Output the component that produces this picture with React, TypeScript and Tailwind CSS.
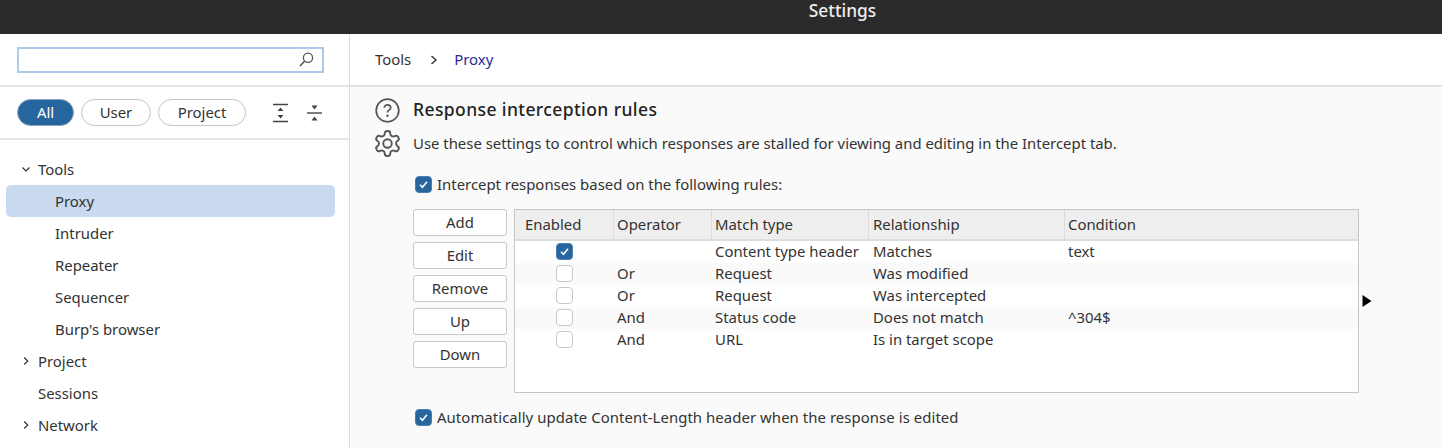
import React from "react";

const Check = ({ on }: { on: boolean }) =>
  on ? (
    <span className="flex h-[17px] w-[17px] shrink-0 items-center justify-center rounded-[4px] bg-[#27659f] border border-[#4a7fb0]">
      <svg width="11" height="11" viewBox="0 0 11 11" fill="none">
        <path d="M2 5.8 L4.4 8.2 L9 2.8" stroke="#fff" strokeWidth="1.6" />
      </svg>
    </span>
  ) : (
    <span className="block h-[17px] w-[17px] shrink-0 rounded-[4px] bg-white border border-[#c8c8c8]" />
  );

const Pill = ({ label, w, active }: { label: string; w: string; active?: boolean }) => (
  <div
    className={`flex h-[27px] items-center justify-center rounded-full border text-[14.9px] ${w} ${
      active ? "bg-[#27659f] border-[#8aa6c0] text-white" : "bg-white border-[#c4c4c4] text-[#333]"
    }`}
  >
    {label}
  </div>
);

const TreeRow = ({ label, depth, arrow, selected }: { label: string; depth: number; arrow?: "down" | "right"; selected?: boolean }) => (
  <div className={`flex h-8 items-center rounded-[5px] ${selected ? "bg-[#c9daf0]" : ""}`}>
    <div className={depth === 1 ? "w-[49px]" : "w-[32px] flex justify-center pl-[7px]"}>
      {arrow === "down" && (
        <svg width="10" height="10" viewBox="0 0 10 10" fill="none">
          <path d="M1.5 3.5 L5 7 L8.5 3.5" stroke="#333" strokeWidth="1.2" />
        </svg>
      )}
      {arrow === "right" && (
        <svg width="10" height="10" viewBox="0 0 10 10" fill="none">
          <path d="M3.2 1.5 L6.7 5 L3.2 8.5" stroke="#333" strokeWidth="1.2" />
        </svg>
      )}
    </div>
    <span className="text-[14.9px] text-[#333]">{label}</span>
  </div>
);

const cols = ["w-[99px]", "w-[98px]", "w-[157px]", "w-[196px]", "flex-1"];
const headers = ["Enabled", "Operator", "Match type", "Relationship", "Condition"];
const rows = [
  { on: true, op: "", match: "Content type header", rel: "Matches", cond: "text" },
  { on: false, op: "Or", match: "Request", rel: "Was modified", cond: "" },
  { on: false, op: "Or", match: "Request", rel: "Was intercepted", cond: "" },
  { on: false, op: "And", match: "Status code", rel: "Does not match", cond: "^304$" },
  { on: false, op: "And", match: "URL", rel: "Is in target scope", cond: "" },
];

export default function App() {
  return (
    <div className="flex h-[448px] w-[1442px] flex-col overflow-hidden bg-white text-[#333] font-['Noto_Sans',sans-serif]">
      <div className="flex h-[34px] shrink-0 items-start justify-center bg-[#2b2b2b] pl-[243px]">
        <span className="text-[17.3px] font-medium leading-[22px] text-[#eeeeee]">Settings</span>
      </div>
      <div className="flex min-h-0 flex-1">
        <aside className="flex w-[350px] shrink-0 flex-col border-r border-[#dcdcdc] bg-white">
          <div className="flex h-[53px] shrink-0 items-center border-b-2 border-[#e4e4e4] pl-[17px] pr-[25px]">
            <div className="flex h-[26px] flex-1 items-center justify-end border-2 border-[#a9cbed] bg-white pr-[7px]">
              <svg width="17" height="17" viewBox="0 0 17 17" fill="none">
                <circle cx="10" cy="6.8" r="4.6" stroke="#555" strokeWidth="1.3" />
                <path d="M6.6 10.2 L2 15" stroke="#555" strokeWidth="1.5" />
              </svg>
            </div>
          </div>
          <div className="flex h-[53px] shrink-0 items-center border-b-2 border-[#e4e4e4] pl-[17px]">
            <div className="flex gap-[7px]">
              <Pill label="All" w="w-[57px]" active />
              <Pill label="User" w="w-[70px]" />
              <Pill label="Project" w="w-[88px]" />
            </div>
            <div className="ml-[26px] flex items-center gap-[17px]">
              <svg width="17" height="20" viewBox="0 0 17 20" fill="none">
                <path d="M1 1.5 H16 M1 18.5 H16" stroke="#444" strokeWidth="1.4" />
                <path d="M8.5 4.5 L11.5 8 H5.5 Z M8.5 15.5 L11.5 12 H5.5 Z" fill="#444" />
              </svg>
              <svg width="17" height="20" viewBox="0 0 17 20" fill="none">
                <path d="M1 10 H16" stroke="#444" strokeWidth="1.4" />
                <path d="M8.5 6.5 L5.5 2.5 H11.5 Z M8.5 13.5 L5.5 17.5 H11.5 Z" fill="#444" />
              </svg>
            </div>
          </div>
          <div className="flex flex-col pl-[6px] pr-[14px] pt-[13px]">
            <TreeRow label="Tools" depth={0} arrow="down" />
            <TreeRow label="Proxy" depth={1} selected />
            <TreeRow label="Intruder" depth={1} />
            <TreeRow label="Repeater" depth={1} />
            <TreeRow label="Sequencer" depth={1} />
            <TreeRow label="Burp's browser" depth={1} />
            <TreeRow label="Project" depth={0} arrow="right" />
            <TreeRow label="Sessions" depth={0} />
            <TreeRow label="Network" depth={0} arrow="right" />
          </div>
        </aside>
        <main className="flex min-w-0 flex-1 flex-col bg-[#fafafa]">
          <div className="flex h-[53px] shrink-0 items-center border-b-2 border-[#e4e4e4] bg-white pl-[25px] text-[14.9px]">
            <span className="text-[#333]">Tools</span>
            <svg className="ml-[18px] mr-[15px]" width="10" height="12" viewBox="0 0 10 12" fill="none">
              <path d="M2.5 2 L7 6 L2.5 10" stroke="#333" strokeWidth="1.4" />
            </svg>
            <span className="text-[#2b2b98]">Proxy</span>
          </div>
          <div className="flex gap-[13px] pl-[25px] pt-[10px]">
            <div className="flex w-[25px] shrink-0 flex-col items-center gap-[8px] pt-[1px]">
              <svg width="25" height="25" viewBox="0 0 25 25" fill="none">
                <circle cx="12.5" cy="12.5" r="11.3" stroke="#555" strokeWidth="1.7" />
                <path d="M9.3 9.8 C9.3 7.9 10.8 6.9 12.5 6.9 C14.3 6.9 15.7 8 15.7 9.7 C15.7 12 12.5 11.8 12.5 14.6" stroke="#555" strokeWidth="1.7" />
                <circle cx="12.5" cy="17.8" r="1.2" fill="#555" />
              </svg>
              <svg width="25" height="25" viewBox="2 2 20 20" fill="none" stroke="#555" strokeWidth="1.5" strokeLinejoin="round" overflow="visible">
                <path d="M12.22 2h-.44a2 2 0 0 0-2 2v.18a2 2 0 0 1-1 1.73l-.43.25a2 2 0 0 1-2 0l-.15-.08a2 2 0 0 0-2.73.73l-.22.38a2 2 0 0 0 .73 2.73l.15.1a2 2 0 0 1 1 1.72v.51a2 2 0 0 1-1 1.74l-.15.09a2 2 0 0 0-.73 2.73l.22.38a2 2 0 0 0 2.73.73l.15-.08a2 2 0 0 1 2 0l.43.25a2 2 0 0 1 1 1.73V20a2 2 0 0 0 2 2h.44a2 2 0 0 0 2-2v-.18a2 2 0 0 1 1-1.73l.43-.25a2 2 0 0 1 2 0l.15.08a2 2 0 0 0 2.73-.73l.22-.39a2 2 0 0 0-.73-2.73l-.15-.08a2 2 0 0 1-1-1.74v-.5a2 2 0 0 1 1-1.74l.15-.09a2 2 0 0 0 .73-2.73l-.22-.38a2 2 0 0 0-2.73-.73l-.15.08a2 2 0 0 1-2 0l-.43-.25a2 2 0 0 1-1-1.73V4a2 2 0 0 0-2-2z" />
                <circle cx="12" cy="12" r="3.4" />
              </svg>
            </div>
            <div className="flex min-w-0 flex-1 flex-col">
              <h1 className="text-[17.5px] font-medium leading-[24px] text-[#222] tracking-[0.4px]">Response interception rules</h1>
              <p className="mt-[12px] text-[14.9px] leading-[20px] text-[#333]">
                Use these settings to control which responses are stalled for viewing and editing in the Intercept tab.
              </p>
              <div className="mt-[21px] ml-[2px] flex items-center gap-[5px] text-[14.9px] leading-[20px]">
                <Check on />
                <span>Intercept responses based on the following rules:</span>
              </div>
              <div className="mt-[15px] flex">
                <div className="flex w-[94px] shrink-0 flex-col gap-[6px]">
                  {["Add", "Edit", "Remove", "Up", "Down"].map((b) => (
                    <div key={b} className="flex h-[27px] items-center justify-center rounded-[3px] border border-[#c8c8c8] bg-white text-[14.9px]">
                      {b}
                    </div>
                  ))}
                </div>
                <div className="ml-[7px] flex h-[184px] w-[845px] shrink-0 flex-col border border-[#c6c6c6] bg-white">
                  <div className="flex h-[31px] shrink-0 border-b-2 border-[#dddddd] bg-[#eeeeee]">
                    {headers.map((h, i) => (
                      <div key={h} className={`flex items-center text-[14.9px] ${cols[i]} ${i < 4 ? "border-r border-[#dcdcdc]" : ""} ${i === 0 ? "pl-[10px]" : i === 3 ? "pl-[4px]" : "pl-[3px]"}`}>
                        {h}
                      </div>
                    ))}
                  </div>
                  {rows.map((r, idx) => (
                    <div key={idx} className={`flex h-[22px] shrink-0 items-center pb-[1px] text-[14.9px] ${idx % 2 ? "bg-[#fafafa]" : "bg-white"}`}>
                      <div className={`${cols[0]} flex justify-center`}>
                        <Check on={r.on} />
                      </div>
                      <div className={`${cols[1]} pl-[3px]`}>{r.op}</div>
                      <div className={`${cols[2]} pl-[3px] whitespace-nowrap`}>{r.match}</div>
                      <div className={`${cols[3]} pl-[4px]`}>{r.rel}</div>
                      <div className={`${cols[4]} pl-[3px]`}>{r.cond}</div>
                    </div>
                  ))}
                </div>
                <svg className="ml-[3px] mt-[86px]" width="10" height="12" viewBox="0 0 10 12">
                  <path d="M0.5 0 L9.5 6 L0.5 12 Z" fill="#000" />
                </svg>
              </div>
              <div className="mt-[14px] ml-[2px] flex items-center gap-[5px] text-[14.9px] leading-[20px] tracking-[0.07px]">
                <Check on />
                <span>Automatically update Content-Length header when the response is edited</span>
              </div>
            </div>
          </div>
        </main>
      </div>
    </div>
  );
}
